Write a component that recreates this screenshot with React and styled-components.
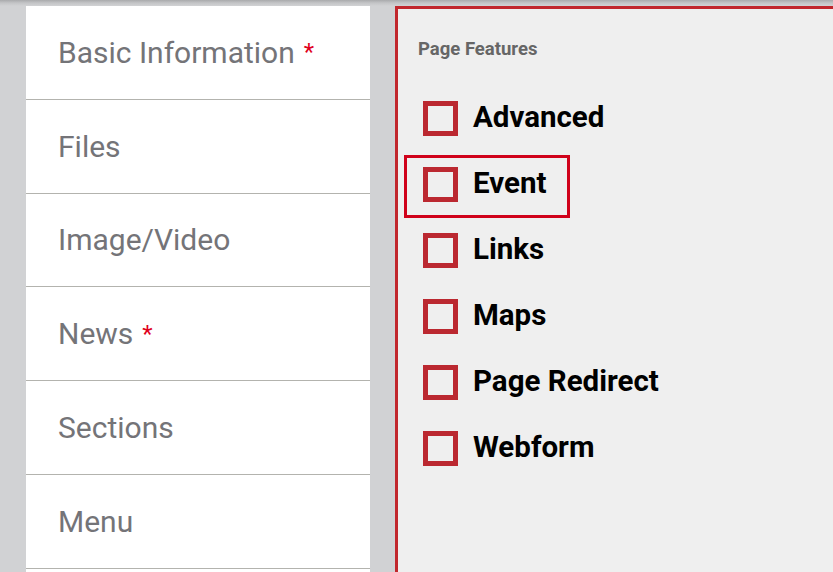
import React from "react";
import styled, { createGlobalStyle } from "styled-components";

const Global = createGlobalStyle`
  html, body { margin: 0; padding: 0; }
  body {
    background: #d1d2d4;
    font-family: Roboto, "Liberation Sans", Arial, sans-serif;
    overflow: hidden;
  }
`;

const Page = styled.div`
  width: 833px;
  height: 572px;
  overflow: hidden;
  background: linear-gradient(#a9aaac 0px, #c4c5c7 3px, #d1d2d4 6px);
  display: flex;
  align-items: flex-start;
  gap: 25px;
  padding: 6px 0 0 26px;
  box-sizing: border-box;
`;

const Nav = styled.nav`
  width: 344px;
  flex: none;
  background: #fff;
  display: flex;
  flex-direction: column;
`;

const NavItem = styled.div`
  height: 93.8px;
  box-sizing: border-box;
  border-bottom: 1px solid #b3b3ae;
  display: flex;
  align-items: center;
  padding-left: 32px;
  font-size: 30px;
  color: #747478;
`;

const Star = styled.span`
  color: #e0001b;
  margin-left: 9px;
  font-size: 24px;
`;

const Panel = styled.section`
  flex: none;
  width: 520px;
  height: 620px;
  box-sizing: border-box;
  background: #efefef;
  border: 3px solid #c1272d;
  padding: 29px 0 0 20px;
`;

const Title = styled.div`
  font-size: 18.5px;
  font-weight: 700;
  color: #666;
  line-height: 22px;
`;

const List = styled.div`
  margin-top: 41px;
  display: flex;
  flex-direction: column;
`;

const Item = styled.label`
  position: relative;
  height: 66px;
  display: flex;
  align-items: flex-start;
  gap: 15px;
  padding-left: 5px;
  font-size: 29.5px;
  font-weight: 700;
  color: #000;
`;

const Box = styled.span`
  width: 35px;
  height: 35px;
  box-sizing: border-box;
  border: 5px solid #bb2830;
  flex: none;
`;

const Text = styled.span`
  line-height: 35px;
  margin-top: -1px;
`;

const Highlight = styled.span`
  position: absolute;
  left: -14px;
  top: -12px;
  width: 166px;
  height: 63px;
  box-sizing: border-box;
  border: 3px solid #d0021b;
  pointer-events: none;
`;

const navItems = [
  { label: "Basic Information", required: true },
  { label: "Files" },
  { label: "Image/Video" },
  { label: "News", required: true },
  { label: "Sections" },
  { label: "Menu" },
  { label: "" },
];

const features = ["Advanced", "Event", "Links", "Maps", "Page Redirect", "Webform"];

export default function App() {
  return (
    <>
      <Global />
      <Page>
        <Nav>
          {navItems.map((n, i) => (
            <NavItem key={i}>
              {n.label}
              {n.required && <Star>*</Star>}
            </NavItem>
          ))}
        </Nav>
        <Panel>
          <Title>Page Features</Title>
          <List>
            {features.map((f) => (
              <Item key={f}>
                <Box />
                <Text>{f}</Text>
                {f === "Event" && <Highlight />}
              </Item>
            ))}
          </List>
        </Panel>
      </Page>
    </>
  );
}
